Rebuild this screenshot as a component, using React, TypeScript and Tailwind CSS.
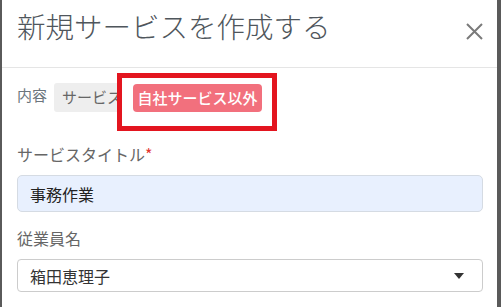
import React from "react";

export default function App() {
  const font = { fontFamily: '"Noto Sans CJK JP", "Noto Sans", sans-serif' };
  return (
    <div className="w-[501px] h-[307px] bg-[#5a5a5a] overflow-hidden flex" style={font}>
      <div className="ml-[2px] w-[495px] h-full bg-white flex flex-col">
        <div className="h-[68px] border-b border-[#e5e5e5] flex items-start justify-between pl-[15px] pr-[14px]">
          <div className="mt-[6px] text-[28.5px] leading-[40px] font-light text-[#4f565c]">新規サービスを作成する</div>
          <svg className="mt-[23px]" width="17" height="17" viewBox="0 0 17 17">
            <path d="M1 1L16 16M16 1L1 16" stroke="#7a7a7a" strokeWidth="2" />
          </svg>
        </div>
        <div className="relative h-[64px] flex items-center pl-[15px]">
          <span className="text-[15px] text-[#6c757d] mr-[7px] -mt-[10px]">内容</span>
          <div className="-mt-[5px] h-[29px] px-[8px] flex items-center bg-[#eeeeee] rounded-[3px] text-[15px] text-[#666]">サービス</div>
          <div className="absolute left-[115px] top-[5px] w-[160px] h-[58px] border-[5px] border-[#e3151f] bg-white flex items-start">
            <div className="ml-[11px] mt-[6px] h-[28px] w-[129px] rounded-[4px] bg-[#f2707d] text-white text-[15px] font-medium flex items-center justify-center">自社サービス以外</div>
          </div>
        </div>
        <div className="px-[15px] mt-[10px]">
          <div className="text-[16px] leading-[24px] text-[#666]">
            サービスタイトル<span className="text-[#e3342f]">*</span>
          </div>
          <div className="mt-[9px] h-[37px] w-[466px] rounded-[5px] border border-[#d5dbe3] bg-[#e8f0fe] flex items-center px-[12px] text-[16px] text-[#222]">事務作業</div>
          <div className="mt-[14px] text-[16px] leading-[24px] text-[#666]">従業員名</div>
          <div className="mt-[9px] h-[33px] w-[466px] rounded-[4px] border border-[#cccccc] bg-white flex items-center justify-between pl-[12px] pr-[18px] text-[16px] text-[#333]">
            <span>箱田恵理子</span>
            <svg width="10" height="6" viewBox="0 0 10 6"><path d="M0 0H10L5 6Z" fill="#333" /></svg>
          </div>
        </div>
      </div>
    </div>
  );
}
